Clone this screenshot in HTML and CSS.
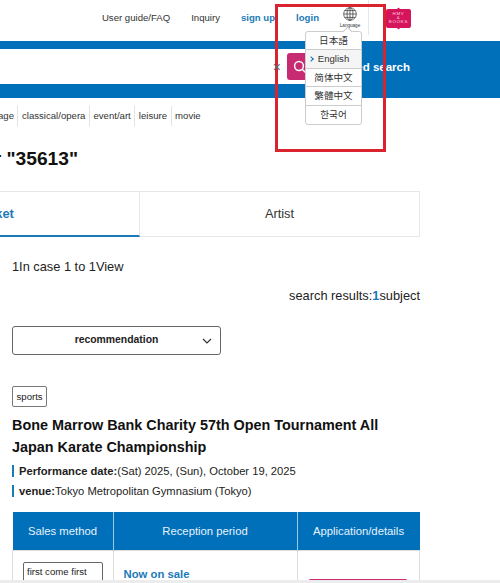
FILE: index.html
```html
<!DOCTYPE html>
<html lang="en">
<head>
    <meta charset="UTF-8">
    <meta name="viewport" content="width=device-width, initial-scale=1.0">
    <title>Search results</title>
    <link rel="stylesheet" href="styles.css">
</head>
<body>
    <header class="top-bar">
        <a class="top-link" href="#">User guide/FAQ</a>
        <a class="top-link" href="#">Inquiry</a>
        <a class="top-link top-link-strong" href="#">sign up</a>
        <a class="top-link top-link-strong" href="#">login</a>
        <div class="language">
            <svg class="globe" width="14" height="14" viewBox="0 0 14 14" fill="none" stroke="#444" stroke-width="0.8">
                <circle cx="7" cy="7" r="6.3"/>
                <ellipse cx="7" cy="7" rx="3" ry="6.3"/>
                <path d="M7 .7v12.6M.7 7h12.6M1.6 3.6h10.8M1.6 10.4h10.8"/>
            </svg>
            <span class="language-label">Language</span>
            <ul class="language-menu">
                <li>日本語</li>
                <li class="language-current">English</li>
                <li>简体中文</li>
                <li>繁體中文</li>
                <li>한국어</li>
            </ul>
        </div>
        <div class="hmv-tile">HMV<br>&amp;<br>BOOKS</div>
    </header>

    <div class="search-bar">
        <div class="search-field">
            <span class="search-clear">×</span>
            <button class="search-button">
                <svg width="14" height="14" viewBox="0 0 14 14" fill="none" stroke="#fff" stroke-width="1.5">
                    <circle cx="6" cy="6" r="4.4"/>
                    <path d="M9.2 9.2l3.8 3.8"/>
                </svg>
            </button>
        </div>
        <a class="detail-link" href="#">Detailed search</a>
    </div>

    <nav class="genre-nav">
        <a href="#">stage</a>
        <a href="#">classical/opera</a>
        <a href="#">event/art</a>
        <a href="#">leisure</a>
        <a href="#">movie</a>
    </nav>

    <h1 class="page-title">Search results for "35613"</h1>

    <div class="tabs">
        <div class="tab tab-active">Ticket</div>
        <div class="tab">Artist</div>
    </div>

    <main class="results">
        <p class="result-range">1In case 1 to 1View</p>
        <p class="result-count">search results:<b>1</b>subject</p>
        <div class="sort-select">
            <span>recommendation</span>
            <svg class="sort-arrow" width="10" height="6" viewBox="0 0 10 6" fill="none" stroke="#333" stroke-width="1.2">
                <path d="M1 1l4 4 4-4"/>
            </svg>
        </div>

        <span class="genre-tag">sports</span>
        <h2 class="event-title">Bone Marrow Bank Charity 57th Open Tournament All Japan Karate Championship</h2>
        <p class="event-info"><b>Performance date:</b>(Sat) 2025, (Sun), October 19, 2025</p>
        <p class="event-info"><b>venue:</b>Tokyo Metropolitan Gymnasium (Tokyo)</p>

        <table class="sales-table">
            <tr>
                <th class="col-method">Sales method</th>
                <th class="col-period">Reception period</th>
                <th>Application/details</th>
            </tr>
            <tr>
                <td><span class="sale-type">first come first</span></td>
                <td><span class="sale-status">Now on sale</span></td>
                <td><span class="apply-button"></span></td>
            </tr>
        </table>
    </main>

    <div class="page-red-box"></div>
    <div class="bottom-edge"></div>
</body>
</html>
```

FILE: styles.css
```css
html, body {
    height: 583px;
    overflow: hidden;
}
body {
    margin: 0;
    background: #fff;
    color: #222;
    font-family: "Liberation Sans", Arial, sans-serif;
    position: relative;
}
a {
    color: inherit;
    text-decoration: none;
}
p, h1, h2, ul {
    margin: 0;
    padding: 0;
}

.top-bar {
    display: flex;
    justify-content: flex-end;
    align-items: center;
    gap: 21px;
    height: 41px;
    padding: 0 89px 6px 0;
    box-sizing: border-box;
    font-size: 9.6px;
}
.top-link {
    color: #333;
}
.top-link-strong {
    color: #1b7ab8;
    font-weight: bold;
}
.language {
    position: relative;
    display: flex;
    flex-direction: column;
    align-items: center;
    width: 30px;
    margin-left: -5px;
}
.language:after {
    content: "";
    position: absolute;
    left: 33px;
    top: -7px;
    width: 1px;
    height: 35px;
    background: #e6e6e6;
}
.language-label {
    font-size: 4.6px;
    line-height: 7px;
    margin-top: 1px;
    color: #333;
}
.language-menu {
    position: absolute;
    top: 24.5px;
    left: -30px;
    width: 57px;
    box-sizing: border-box;
    list-style: none;
    background: #fff;
    border: 1px solid #ccc;
    border-radius: 3px;
    z-index: 2;
    font-family: "Liberation Sans", "Noto Sans CJK JP", sans-serif;
    font-size: 9.6px;
    color: #333;
}
.language-menu:before {
    content: "";
    position: absolute;
    top: -4px;
    right: 10px;
    width: 6px;
    height: 6px;
    background: #fff;
    border-top: 1px solid #ccc;
    border-left: 1px solid #ccc;
    transform: rotate(45deg);
}
.language-menu li {
    position: relative;
    height: 18.4px;
    line-height: 18px;
    text-align: center;
    box-sizing: border-box;
    border-bottom: 1px solid #ccc;
}
.language-menu li:last-child {
    border-bottom: 0;
}
.language-current {
    background: #f5f5f5;
}
.language-current:before {
    content: "";
    position: absolute;
    left: 3px;
    top: 7px;
    width: 3px;
    height: 3px;
    border-top: 1.2px solid #0f6fb5;
    border-right: 1.2px solid #0f6fb5;
    transform: rotate(45deg);
}
.hmv-tile {
    position: relative;
    width: 25px;
    height: 19px;
    margin-top: 1px;
    border-radius: 2px;
    background: #d6145c;
    color: #f8d3e1;
    font-size: 4.4px;
    line-height: 4.3px;
    letter-spacing: 0.8px;
    text-align: center;
    padding-top: 3px;
    box-sizing: border-box;
}
.hmv-tile:before,
.hmv-tile:after {
    content: "";
    position: absolute;
    left: 11px;
    width: 3px;
    height: 3px;
    background: #d6145c;
    transform: rotate(45deg);
}
.hmv-tile:before {
    top: -1px;
}
.hmv-tile:after {
    bottom: -1px;
}

.search-bar {
    display: flex;
    align-items: center;
    gap: 7px;
    height: 57px;
    padding: 8px 90px 14px 0;
    box-sizing: border-box;
    background: #0070bb;
}
.search-field {
    flex: 1;
    display: flex;
    justify-content: flex-end;
    align-items: center;
    gap: 6px;
    height: 35px;
    padding-right: 5px;
    background: #fff;
}
.search-clear {
    position: relative;
    z-index: 4;
    color: #667;
    font-size: 14px;
}
.search-button {
    display: flex;
    align-items: center;
    justify-content: center;
    width: 26px;
    height: 27px;
    padding: 0;
    border: 0;
    border-radius: 3px;
    background: #c72c72;
}
.detail-link {
    color: #fff;
    font-size: 11.5px;
    font-weight: bold;
}

.genre-nav {
    display: flex;
    align-items: center;
    height: 20px;
    margin: 8px 0 0 -13px;
    font-size: 9.6px;
    color: #333;
}
.genre-nav a {
    padding: 3px 3.5px;
    line-height: 14px;
    border-left: 1px solid #e2e2e2;
}
.genre-nav a:first-child {
    border-left: 0;
}

.page-title {
    margin: 21px 0 0 -162px;
    font-size: 19.2px;
    line-height: 24px;
    white-space: nowrap;
    color: #111;
}

.tabs {
    display: flex;
    width: 561px;
    height: 46px;
    margin: 20px 0 0 -141px;
    box-sizing: border-box;
    border-top: 1px solid #e6e6e6;
    border-bottom: 1px solid #e6e6e6;
    border-right: 1px solid #e6e6e6;
    font-size: 12.8px;
}
.tab {
    flex: 1;
    text-align: center;
    line-height: 43px;
    color: #333;
}
.tab-active {
    flex: 0 0 281px;
    box-sizing: border-box;
    color: #1b7ab8;
    font-weight: bold;
    padding-right: 7px;
    border-right: 1px solid #e6e6e6;
    border-bottom: 2px solid #1b7ab8;
    margin-bottom: -1px;
}

.results {
    width: 408px;
    margin-left: 12px;
    font-size: 12.8px;
}
.result-range {
    margin-top: 22px;
    line-height: 16px;
}
.result-count {
    margin-top: 13px;
    line-height: 16px;
    text-align: right;
}
.result-count b {
    color: #1b7ab8;
}
.sort-select {
    position: relative;
    width: 209px;
    height: 29px;
    margin-top: 22px;
    box-sizing: border-box;
    border: 1px solid #666;
    border-radius: 3px;
    font-size: 10.4px;
    font-weight: bold;
    line-height: 26px;
    text-align: center;
}
.sort-arrow {
    position: absolute;
    right: 8px;
    top: 11px;
}
.genre-tag {
    display: inline-block;
    margin-top: 31px;
    padding: 0 3.5px;
    height: 21px;
    box-sizing: border-box;
    border: 1px solid #777;
    border-radius: 2px;
    font-size: 9.6px;
    line-height: 19px;
    vertical-align: top;
}
.event-title {
    margin: 7px 0 7px;
    font-size: 14.4px;
    line-height: 22px;
    color: #111;
}
.event-info {
    margin-bottom: 8px;
    padding-left: 5px;
    border-left: 2px solid #1b7ab8;
    font-size: 11.2px;
    line-height: 12px;
}
.sales-table {
    width: 408px;
    margin-top: 15px;
    border-collapse: collapse;
    table-layout: fixed;
    font-size: 11.3px;
}
.sales-table th {
    height: 38px;
    padding: 0;
    background: #0070bb;
    color: #e6f2fa;
    font-weight: normal;
    border-left: 1px solid #9ccae8;
}
.sales-table th:first-child {
    border-left: 0;
}
.sales-table td {
    height: 60px;
    padding: 0;
    border: 1px solid #ddd;
    text-align: center;
    vertical-align: top;
}
.col-method {
    width: 100px;
}
.col-period {
    width: 183px;
}
.sale-type {
    display: block;
    width: 80px;
    height: 30px;
    margin: 11px 0 0 10px;
    box-sizing: border-box;
    border: 1px solid #666;
    border-radius: 2px;
    font-size: 9.6px;
    line-height: 18px;
    text-align: left;
    padding-left: 3px;
}
.sale-status {
    display: block;
    margin: 17px 0 0 10px;
    color: #1b7ab8;
    font-weight: bold;
    text-align: left;
}
.apply-button {
    display: block;
    width: 100px;
    height: 30px;
    margin: 28px 0 0 10px;
    border-radius: 3px 3px 0 0;
    background: #c72c72;
}

.page-red-box {
    position: absolute;
    left: 275px;
    top: 4px;
    width: 111px;
    height: 148px;
    box-sizing: border-box;
    border: 3.5px solid #d9232e;
    z-index: 3;
}
.bottom-edge {
    position: absolute;
    left: 0;
    right: 0;
    bottom: 0;
    height: 3px;
    background: #ececec;
    z-index: 4;
}
```
